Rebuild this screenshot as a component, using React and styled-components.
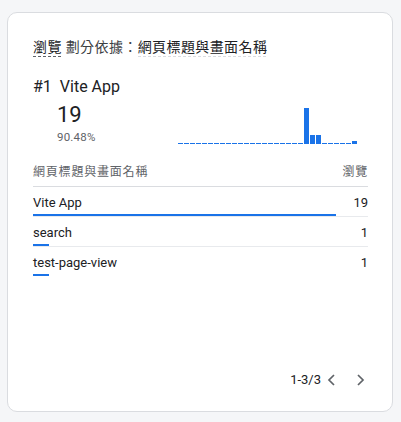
import React from 'react';
import styled, { createGlobalStyle } from 'styled-components';

const GlobalStyle = createGlobalStyle`
    html, body {
        margin: 0;
        padding: 0;
        background: #f5f6f8;
    }
    body {
        font-family: Roboto, "Noto Sans CJK TC", sans-serif;
        color: #202124;
    }
`;

const Page = styled.div`
    padding: 12px 8px 10px 7px;
`;

const Card = styled.div`
    box-sizing: border-box;
    width: 386px;
    height: 400px;
    background: #fff;
    border: 1px solid #dadce0;
    border-radius: 10px;
    padding: 24px 24px 21px 25px;
    display: flex;
    flex-direction: column;
`;

const Title = styled.div`
    font-size: 14px;
    line-height: 20px;
    letter-spacing: 0.4px;
    color: #3c4043;
`;

const Dashed = styled.span`
    padding-bottom: 2px;
    color: #202124;
    background-image: repeating-linear-gradient(to right, ${p => p.$line} 0 3px, transparent 3px 5px);
    background-size: 100% 1px;
    background-position: left bottom;
    background-repeat: no-repeat;
`;

const Rank = styled.div`
    margin-top: 19px;
    display: flex;
    gap: 8px;
    font-size: 16px;
    line-height: 22px;
    color: #202124;
`;

const StatsRow = styled.div`
    margin-top: 3px;
    display: flex;
    align-items: flex-end;
`;

const Stats = styled.div`
    width: 121px;
    padding-left: 24px;
`;

const BigNumber = styled.div`
    font-size: 22px;
    line-height: 28px;
    color: #202124;
`;

const Percent = styled.div`
    font-size: 11.5px;
    line-height: 16px;
    color: #5f6368;
    letter-spacing: 0.2px;
`;

const Chart = styled.div`
    height: 36px;
    display: flex;
    gap: 1px;
    align-items: flex-end;
    margin-bottom: 1px;
`;

const Bar = styled.div`
    width: 5px;
    background: #1a73e8;
    height: ${p => p.$h}px;
`;

const Table = styled.div`
    margin-top: 19px;
`;

const HeadRow = styled.div`
    display: flex;
    justify-content: space-between;
    font-size: 12px;
    line-height: 16px;
    letter-spacing: 0.8px;
    color: #5f6368;
    padding-bottom: 6px;
    border-bottom: 1px solid #dadce0;
`;

const Row = styled.div`
    padding-top: 8px;
    border-bottom: 1px solid ${p => (p.$last ? 'transparent' : '#e8eaed')};
`;

const RowLine = styled.div`
    display: flex;
    justify-content: space-between;
    font-size: 13px;
    line-height: 15px;
    color: #202124;
`;

const Meter = styled.div`
    margin-top: 4px;
    height: 2px;
    background: #1a73e8;
`;

const Pager = styled.div`
    margin-top: auto;
    margin-right: 3px;
    display: flex;
    justify-content: flex-end;
    align-items: center;
    font-size: 13px;
    line-height: 20px;
    color: #202124;
`;

const Chevron = styled.svg`
    margin-left: ${p => p.$gap}px;
    display: block;
`;

const chartData = [
    0, 0, 0, 0, 0, 0, 0, 0, 0, 0, 0, 0, 0, 0, 0, 0, 0, 0, 0, 0, 0,
    12, 3, 3, 0, 0, 0, 0, 0, 1,
];

const rows = [
    { name: 'Vite App', views: 19 },
    { name: 'search', views: 1 },
    { name: 'test-page-view', views: 1 },
];

const total = rows.reduce((s, r) => s + r.views, 0);

export default function App() {
    return (
        <Page>
            <GlobalStyle />
            <Card>
                <Title>
                    <Dashed $line="#5f6368">瀏覽</Dashed>
                    {' 劃分依據：'}
                    <Dashed $line="#dadce0">網頁標題與畫面名稱</Dashed>
                </Title>

                <Rank>
                    <span>#1</span>
                    <span>Vite App</span>
                </Rank>

                <StatsRow>
                    <Stats>
                        <BigNumber>19</BigNumber>
                        <Percent>90.48%</Percent>
                    </Stats>
                    <Chart>
                        {chartData.map((v, i) => (
                            <Bar key={i} $h={Math.max(1, (v / 12) * 36)} />
                        ))}
                    </Chart>
                </StatsRow>

                <Table>
                    <HeadRow>
                        <span>網頁標題與畫面名稱</span>
                        <span>瀏覽</span>
                    </HeadRow>
                    {rows.map((r, i) => (
                        <Row key={r.name} $last={i === rows.length - 1}>
                            <RowLine>
                                <span>{r.name}</span>
                                <span>{r.views}</span>
                            </RowLine>
                            <Meter style={{ width: `${(r.views / total) * 100}%` }} />
                        </Row>
                    ))}
                </Table>

                <Pager>
                    <span>1-3/3</span>
                    <Chevron $gap={6} width="8" height="12" viewBox="0 0 8 12">
                        <path d="M7 1 L2 6 L7 11" fill="none" stroke="#5f6368" strokeWidth="1.7" />
                    </Chevron>
                    <Chevron $gap={22} width="8" height="12" viewBox="0 0 8 12">
                        <path d="M1 1 L6 6 L1 11" fill="none" stroke="#5f6368" strokeWidth="1.7" />
                    </Chevron>
                </Pager>
            </Card>
        </Page>
    );
}
